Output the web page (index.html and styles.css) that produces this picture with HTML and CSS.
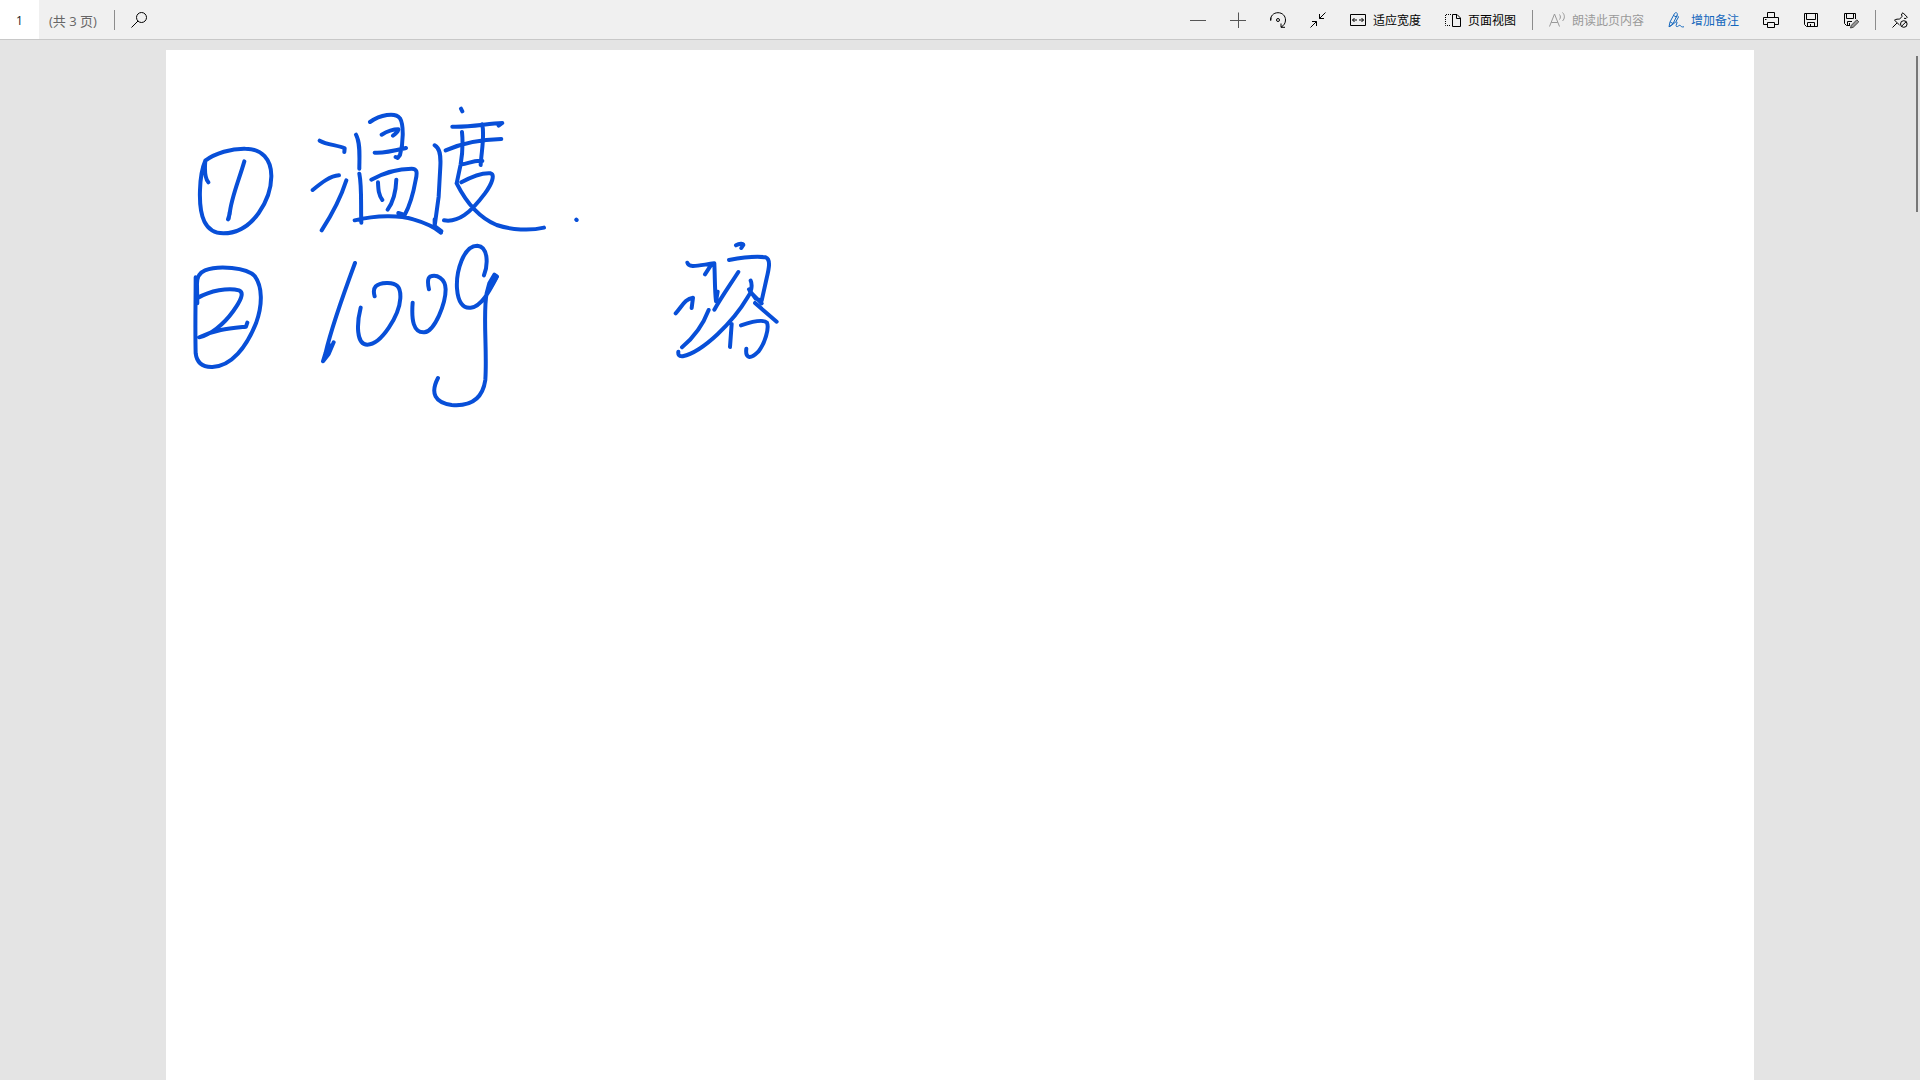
FILE: index.html
```html
<!DOCTYPE html>
<html lang="zh-CN">
<head>
<meta charset="utf-8">
<meta name="viewport" content="width=device-width, initial-scale=1">
<title>PDF</title>
<link rel="stylesheet" href="styles.css">
</head>
<body>
<header class="toolbar">
  <div class="group">
    <input class="page-number" id="page" type="text" value="1" aria-label="页码">
    <label class="page-count" for="page">(共 3 页)</label>
    <span class="separator"></span>
    <button class="tool" type="button" aria-label="搜索"><svg class="icon" viewBox="0 0 16 16"><circle cx="10.5" cy="5.5" r="5"/><path d="M7 9L.5 15.5"/></svg></button>
  </div>
  <div class="group">
    <button class="tool" type="button" aria-label="缩小"><svg class="icon soft" viewBox="0 0 16 16"><path d="M0 8.5H16"/></svg></button>
    <button class="tool" type="button" aria-label="放大"><svg class="icon soft" viewBox="0 0 16 16"><path d="M0 8.5H16M8.5 .5V16"/></svg></button>
    <button class="tool" type="button" aria-label="旋转"><svg class="icon" viewBox="0 0 16 16"><path d="M.7 8.5C.2 4 3.5.7 8 .7C12.5.7 15.5 4 15.5 8C15.5 11 14 13.500 11 15.200M11 11.500V15.300H15M1 5.500L.7 8.500"/><circle cx="8" cy="8" r="1.500"/></svg></button>
    <button class="tool" type="button" aria-label="退出全屏"><svg class="icon" viewBox="0 0 16 16"><path d="M15.500.5L9.500 6.500M9.500 2V6.500H14M.5 15.500L6.500 9.500M2 9.500H6.500V14"/></svg></button>
    <button class="tool" type="button"><svg class="icon" viewBox="0 0 16 16"><path d="M.5 2.500H15.500V13.500H.5ZM2.500 8H7M9 8H13.500M4.500 6L2.500 8L4.500 10M11.500 6L13.500 8L11.500 10"/></svg><span>适应宽度</span></button>
    <button class="tool" type="button"><svg class="icon" viewBox="0 0 16 16"><path d="M7.500 2.500H12L15.500 6V14.500H7.500ZM11.500 2.500V6.500H15.500"/><path stroke-dasharray="1 1" d="M6 2.500H.5V13.500H6"/></svg><span>页面视图</span></button>
    <span class="separator"></span>
    <button class="tool" type="button" disabled><svg class="icon" viewBox="0 0 16 16"><path d="M.5 14.500L5.500 2L10.500 14.500M2.200 10.500H8.800M10.500 2.500C11.700 4 11.700 6 10.500 7.500M13.500.5C16 3 16 6.500 13.500 9"/></svg><span>朗读此页内容</span></button>
    <button class="tool accent" type="button"><svg class="icon" viewBox="0 0 16 16"><path d="M1 14.800L2 10L6.500 1.500C7.500 0 10 .8 9.300 2.800L5 11.800L1 14.800ZM5.500 3.500L8.500 5M2.200 10L5 11.500"/><path d="M9.300 3.500L10.500 5L8 9.500M1 14.800C4 14 7 9.500 8.800 9.800C10 10.500 7 13.500 8.500 14.500C10 15.200 10.800 12.800 12 13.300C13 13.800 13.200 15.500 16 14.800"/></svg><span>增加备注</span></button>
    <button class="tool" type="button" aria-label="打印"><svg class="icon" viewBox="0 0 16 16"><path d="M4.500 5.500V.5H11.500V5.500M4.500 12.500H.5V5.500H15.500V12.500H11.500M4.500 10.500H11.500V15.500H4.500ZM2 7.500H3.500"/></svg></button>
    <button class="tool" type="button" aria-label="保存"><svg class="icon" viewBox="0 0 16 16"><path d="M1.500 1.500H14.500V14.500H3.500L1.500 12.500ZM3.500 1.500V7.500H12.500V1.500M4.500 14.500V10.500H11.500V14.500M7.500 12V14.500"/></svg></button>
    <button class="tool" type="button" aria-label="另存为"><svg class="icon" viewBox="0 0 16 16"><path d="M7 13.500H3.500L1.500 11.500V1.500H12.500V7M3.500 1.500V6.500H10.500V1.500M4.500 13.500V9.500H9M6.500 11V13.500"/><path class="pencil" d="M7.500 16L8.300 13.300L13.800 7.800L15.800 9.800L10.300 15.200Z"/></svg></button>
    <span class="separator"></span>
    <button class="tool" type="button" aria-label="取消固定工具栏"><svg class="icon" viewBox="0 0 16 16"><path d="M.5 15.500L5 11M7.500 13L2.500 8.200C4.200 7 6 7 7.500 7.200L10 4.500L9.500 2L11 .8L15.300 5.200L14 6.500L12 6.300"/><circle cx="11.800" cy="12" r="3.300"/><path d="M9.500 14.300L14.200 9.700"/></svg></button>
  </div>
</header>
<main class="viewer">
  <article class="sheet">
    <svg class="ink" viewBox="0 0 1588 1030" role="img" aria-label="① 温度. ② 100g 溶">
      <g transform="translate(14 80) scale(.3333)">
        <path d="M85 157C75 145 73 125 76 92C105 70 155 55 196 56C245 56 275 88 274 140C273 205 222 309 130 310C75 310 57 260 60 180C61 145 66 115 76 92M193 94C177 150 153 205 149 252L144 268M149 247L146 266"/>
      </g>
      <g transform="translate(134 50) scale(.3333)">
        <path d="M59 122C82 135 115 135 134 145L133 156M38 270C65 248 90 228 117 226M139 241C125 285 98 340 65 391M168 104C182 130 178 170 178 206M178 221C186 260 182 320 184 368M210 66C240 45 285 35 300 55C312 75 310 130 300 165L293 174L287 171M245 104C265 92 285 88 295 88C295 97 285 101 279 107M224 158C255 160 285 152 318 144M214 239C245 222 290 206 335 206C350 206 353 215 347 240C340 280 325 325 314 345L295 339M234 247C235 270 236 285 247 300M289 239C288 270 284 300 263 329M164 361C230 345 300 345 340 358C375 368 402 380 423 398M404 136C420 145 423 165 421 200L416 290L404 378L424 393M404 358L404 375M483 26L487 34M457 80C510 82 560 71 607 69L596 77M547 73C554 110 545 150 542 195M486 96C490 135 486 170 482 193L470 250M437 151C485 130 545 118 604 117M486 193C505 190 525 180 547 183M484 247C515 230 550 218 572 220C585 224 577 250 555 280C510 340 475 368 432 361M470 250C500 310 535 352 590 375C635 390 690 393 732 383M829 359L830 360"/>
      </g>
      <g transform="translate(14 200) scale(.3333)">
        <path d="M47 82C47 160 45 235 47 310C50 335 65 352 97 351C155 349 200 290 228 220C248 165 248 110 224 78C200 52 115 45 75 61C58 68 50 85 51 105L52 160M53 144C90 122 145 112 177 121C195 128 180 155 160 183C130 225 90 255 58 262C105 238 150 235 198 230L202 218"/>
      </g>
      <g transform="translate(134 180) scale(.3333)">
        <path d="M165 99C135 180 95 290 77 368L69 394L86 372L101 337M75 380L95 345M182 233C170 280 168 344 202 344C245 343 298 255 301 205C303 170 290 158 260 159C228 160 216 172 224 199M338 218C334 270 340 309 373 307C405 303 437 220 437 178C436 145 410 132 390 140C381 146 384 165 387 178M552 136C564 105 566 50 532 47C490 47 468 125 471 175C474 215 488 236 512 233C545 230 570 180 591 140L583 134L568 160L560 190C548 250 562 360 556 450C548 505 515 530 455 525C405 518 390 490 414 444"/>
        <path stroke-width="14" d="M589 140L571 171"/>
      </g>
      <g transform="translate(494 180) scale(.3333)">
        <path d="M228 46C237 41 251 39 250 45L244 54M82 98C86 115 115 106 163 100L152 107L135 133M163 101C165 140 164 180 168 214L173 185M235 126C210 165 185 200 163 239M47 250C65 231 75 206 99 203L95 234M146 240C127 290 98 325 66 352M207 90C250 82 290 78 317 82C333 88 327 115 320 145L305 212L287 206L267 178M272 152C278 165 274 188 263 202C220 275 130 365 68 379C56 380 54 373 55 365M270 185L305 220M285 219L350 275M215 282L210 351M243 286C270 277 310 267 321 278C328 295 315 340 295 365C275 385 255 390 259 356"/>
      </g>
    </svg>
  </article>
  <div class="scroll-thumb"></div>
</main>
</body>
</html>
```
FILE: styles.css
```css
* { box-sizing: border-box; }

body {
  margin: 0;
  height: 100vh;
  display: flex;
  flex-direction: column;
  overflow: hidden;
  background: #e4e4e4;
  color: #000;
  font: 12px/20px "Open Sans", "Noto Sans CJK SC", sans-serif;
}

.toolbar {
  display: flex;
  justify-content: space-between;
  flex: none;
  height: 40px;
  background: #f0f0f0;
  border-bottom: 1px solid #c8c8c8;
}

.group {
  display: flex;
  align-items: center;
}

.page-number {
  width: 39px;
  height: 39px;
  padding: 2px 0 0;
  border: 0;
  background: #fff;
  color: #222;
  font: inherit;
  text-align: center;
}

.page-count {
  min-width: 71px;
  padding: 2px 0 0 10px;
  color: #666;
  font-size: 13px;
}

.separator {
  width: 1px;
  height: 20px;
  margin: 0 4px;
  background: #8c8c8c;
}

.tool {
  display: flex;
  align-items: center;
  gap: 7px;
  height: 39px;
  padding: 0 12px;
  border: 0;
  background: transparent;
  color: #000;
  font: inherit;
  white-space: nowrap;
}

.tool span { padding-top: 2px; }
.tool:disabled { color: #999; }
.accent { color: #1467bd; }

.icon {
  flex: none;
  width: 16px;
  height: 16px;
  fill: none;
  stroke: currentColor;
  stroke-width: 1;
  overflow: visible;
}

.soft { stroke: #555; }

.pencil {
  fill: #999;
  stroke: #444;
}

.viewer {
  position: relative;
  flex: 1;
  min-height: 0;
  display: flex;
  justify-content: center;
  padding-top: 10px;
}

.sheet {
  flex: 1;
  margin: 0 166px;
  background: #fff;
}

.ink {
  display: block;
  width: 100%;
  fill: none;
  stroke: #084fd8;
  stroke-width: 12;
  stroke-linecap: round;
  stroke-linejoin: round;
}

.scroll-thumb {
  position: absolute;
  top: 16px;
  right: 2px;
  width: 2px;
  height: 15%;
  background: #777;
}
```
